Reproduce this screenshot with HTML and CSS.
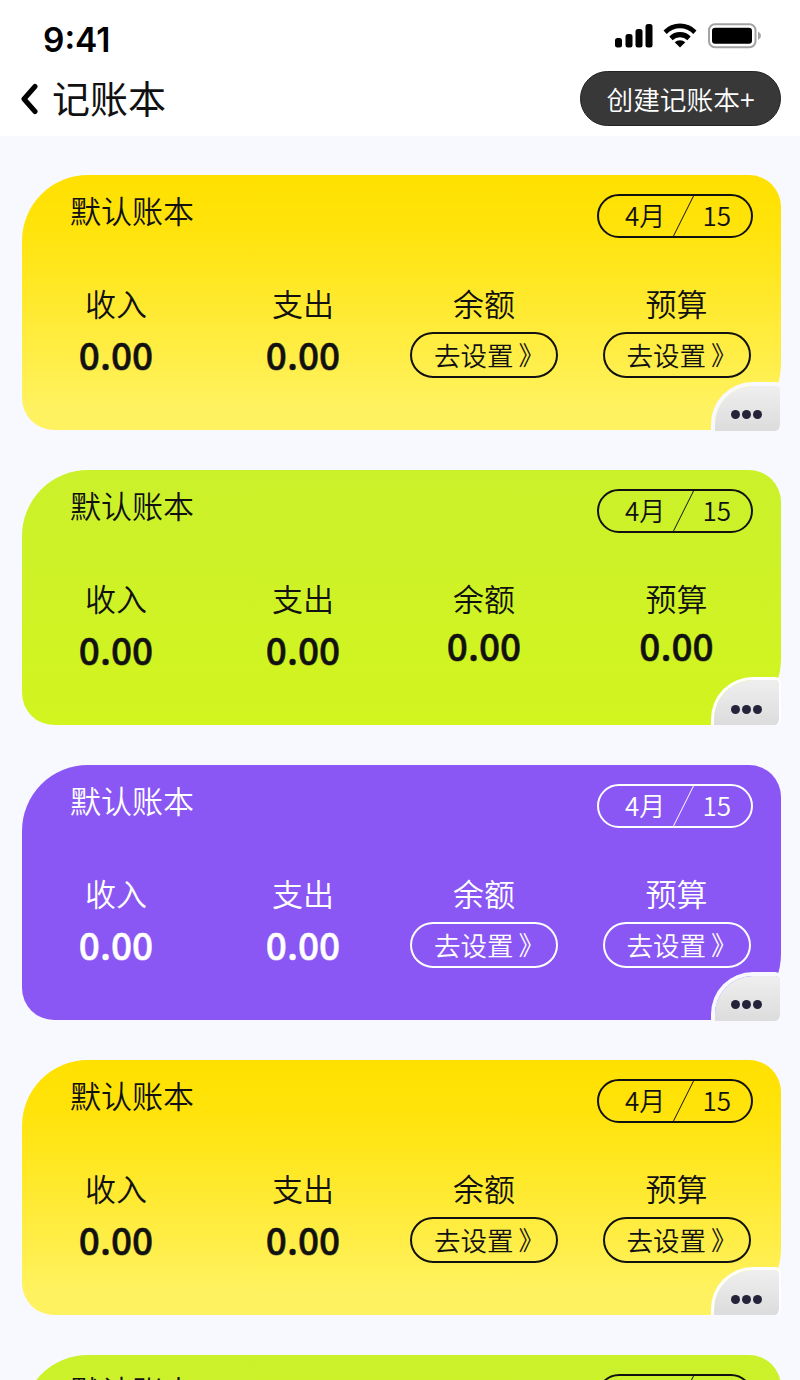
FILE: index.html
```
<!DOCTYPE html>
<html lang="zh-CN">
<head>
    <meta charset="UTF-8">
    <meta name="viewport" content="width=device-width, initial-scale=1.0">
    <title>记账本</title>
    <link rel="stylesheet" href="styles.css">
</head>
<body>

    <header class="header">
        <!-- Status Bar -->
        <div class="status-bar">
            <span class="time">9:41</span>
            <svg class="status-icons" width="148" height="28" viewBox="0 0 148 28">
                <rect x="1" y="16" width="7" height="9.5" rx="2.500"/>
                <rect x="11.500" y="12" width="7" height="13.5" rx="2.500"/>
                <rect x="21.500" y="7" width="7" height="18.500" rx="2.500"/>
                <rect x="31.500" y="2" width="7" height="23.500" rx="2.500"/>
                <path d="M49.500 8.500A23 23 0 0 1 82.500 8.500L79.300 12A18.500 18.500 0 0 0 52.700 12Z"/>
                <path d="M55.300 14.500A15 15 0 0 1 76.700 14.500L73.400 18.200A10.500 10.500 0 0 0 58.600 18.200Z"/>
                <path d="M60.700 20.300A8 8 0 0 1 71.300 20.300L66 25.500Z"/>
                <rect class="battery-case" x="95" y="2.200" width="46.500" height="23" rx="6"/>
                <rect x="98" y="5.700" width="40" height="16" rx="3"/>
                <path class="battery-tip" d="M144 9.500Q147 11 147 13.700T144 18Z"/>
            </svg>
        </div>

        <!-- Title -->
        <div class="nav">
            <svg class="back" width="18" height="32" viewBox="0 0 18 32">
                <path d="M15 3.500L4 16L15 28.500"/>
            </svg>
            <h1>记账本</h1>
            <button type="button" class="create">创建记账本+</button>
        </div>
    </header>

    <main class="books">
        <section class="card yellow">
            <div class="card-top">
                <h2>默认账本</h2>
                <div class="date">
                    <span>4月</span>
                    <svg class="slash" width="21" height="40" viewBox="0 0 21 40"><path d="M20.500 0L0.500 40"/></svg>
                    <span>15</span>
                </div>
            </div>
            <div class="stats">
                <div class="stat"><span>收入</span><b>0.00</b></div>
                <div class="stat"><span>支出</span><b>0.00</b></div>
                <div class="stat"><span>余额</span><button type="button" class="set">去设置<i>》</i></button></div>
                <div class="stat"><span>预算</span><button type="button" class="set">去设置<i>》</i></button></div>
            </div>
            <div class="more"><i></i><i></i><i></i></div>
        </section>

        <section class="card green">
            <div class="card-top">
                <h2>默认账本</h2>
                <div class="date">
                    <span>4月</span>
                    <svg class="slash" width="21" height="40" viewBox="0 0 21 40"><path d="M20.500 0L0.500 40"/></svg>
                    <span>15</span>
                </div>
            </div>
            <div class="stats">
                <div class="stat"><span>收入</span><b>0.00</b></div>
                <div class="stat"><span>支出</span><b>0.00</b></div>
                <div class="stat"><span>余额</span><b class="raised">0.00</b></div>
                <div class="stat"><span>预算</span><b class="raised">0.00</b></div>
            </div>
            <div class="more outlined"><i></i><i></i><i></i></div>
        </section>

        <section class="card purple">
            <div class="card-top">
                <h2>默认账本</h2>
                <div class="date">
                    <span>4月</span>
                    <svg class="slash" width="21" height="40" viewBox="0 0 21 40"><path d="M20.500 0L0.500 40"/></svg>
                    <span>15</span>
                </div>
            </div>
            <div class="stats">
                <div class="stat"><span>收入</span><b>0.00</b></div>
                <div class="stat"><span>支出</span><b>0.00</b></div>
                <div class="stat"><span>余额</span><button type="button" class="set">去设置<i>》</i></button></div>
                <div class="stat"><span>预算</span><button type="button" class="set">去设置<i>》</i></button></div>
            </div>
            <div class="more"><i></i><i></i><i></i></div>
        </section>

        <section class="card yellow">
            <div class="card-top">
                <h2>默认账本</h2>
                <div class="date">
                    <span>4月</span>
                    <svg class="slash" width="21" height="40" viewBox="0 0 21 40"><path d="M20.500 0L0.500 40"/></svg>
                    <span>15</span>
                </div>
            </div>
            <div class="stats">
                <div class="stat"><span>收入</span><b>0.00</b></div>
                <div class="stat"><span>支出</span><b>0.00</b></div>
                <div class="stat"><span>余额</span><button type="button" class="set">去设置<i>》</i></button></div>
                <div class="stat"><span>预算</span><button type="button" class="set">去设置<i>》</i></button></div>
            </div>
            <div class="more outlined"><i></i><i></i><i></i></div>
        </section>

        <section class="card green">
            <div class="card-top">
                <h2>默认账本</h2>
                <div class="date">
                    <span>4月</span>
                    <svg class="slash" width="21" height="40" viewBox="0 0 21 40"><path d="M20.500 0L0.500 40"/></svg>
                    <span>15</span>
                </div>
            </div>
        </section>
    </main>

</body>
</html>
```
FILE: styles.css
```
* {
    box-sizing: border-box;
}
body {
    margin: 0;
    height: 1380px;
    overflow: hidden;
    background: #f8f9fe;
    color: #111;
    font-family: "Noto Sans CJK SC", sans-serif;
    font-weight: 350;
}
h1, h2 {
    margin: 0;
    font-weight: 350;
}
button {
    font: inherit;
    color: inherit;
    padding: 0;
}
i {
    font-style: normal;
}

/* Header */
.header {
    height: 136px;
    background: #fff;
}
.status-bar {
    height: 71px;
    padding: 22px 38px 0 43px;
    display: flex;
    justify-content: space-between;
}
.time {
    font: 600 33.500px/36px Inter, sans-serif;
    color: #000;
}
.status-icons {
    fill: #000;
}
.status-icons .battery-case {
    fill: none;
    stroke: #a3a3a3;
    stroke-width: 2;
}
.status-icons .battery-tip {
    fill: #a3a3a3;
}
.nav {
    height: 55px;
    padding: 0 19px 0 20px;
    display: flex;
    align-items: center;
}
.back {
    fill: none;
    stroke: #000;
    stroke-width: 5;
    stroke-linecap: round;
    stroke-linejoin: round;
}
.nav h1 {
    margin-left: 14px;
    font-size: 38px;
    line-height: 51px;
    padding-bottom: 4px;
    font-weight: 400;
}
.create {
    width: 201px;
    height: 55px;
    margin-left: auto;
    border: 1px solid #222;
    border-radius: 28px;
    background: #383838;
    color: #fff;
    font-size: 26.700px;
    line-height: 50px;
}

/* Account cards */
.books {
    padding: 39px 19px 0 22px;
    display: flex;
    flex-direction: column;
    gap: 40px;
}
.card {
    position: relative;
    flex: none;
    height: 255px;
    border-radius: 66px 32px 66px 32px;
}
.yellow {
    background: linear-gradient(#ffe000, #ffe30a 20%, #fff260 92%);
}
.green {
    background: linear-gradient(#cbf12b, #d2f41f);
}
.purple {
    background: #8a57f4;
    color: #fff;
}
.card-top {
    height: 108px;
    padding: 19px 28px 0 48px;
    display: flex;
    justify-content: space-between;
}
.card-top h2 {
    font-size: 31px;
    line-height: 31px;
}
.date {
    width: 156px;
    height: 44px;
    padding: 0 20px 0 26px;
    display: flex;
    justify-content: space-between;
    border: 2px solid;
    border-radius: 22px;
    font-size: 26px;
    line-height: 38px;
}
.slash {
    margin-right: 1px;
    fill: none;
    stroke: currentColor;
    stroke-width: 1;
}
.stats {
    display: grid;
    grid-template-columns: 188px 186px 176px 209px;
}
.stat {
    display: flex;
    flex-direction: column;
    align-items: center;
    font-size: 31px;
    line-height: 40px;
}
.stat b {
    margin-top: 10px;
    font-size: 37px;
    line-height: 43px;
    font-weight: 500;
    -webkit-text-stroke: 0.500px;
}
.stat .raised {
    margin-top: 6px;
}
.set {
    width: 148px;
    height: 46px;
    margin-top: 9px;
    padding-left: 22px;
    display: flex;
    border: 2px solid;
    border-radius: 23px;
    background: none;
    font-size: 26.500px;
    line-height: 41px;
}
.set i {
    margin-left: 5px;
    font-size: 26px;
    line-height: 39px;
}

/* Corner menu */
.more {
    position: absolute;
    right: 0;
    bottom: -1px;
    width: 70px;
    height: 49px;
    padding: 11px 18px 0 0;
    display: flex;
    justify-content: flex-end;
    align-items: center;
    gap: 2px;
    border: solid #f8f9fe;
    border-width: 4px 1px 0 4px;
    border-radius: 42px 6px 6px 0;
    background: linear-gradient(#efefef, #dcdcdc) padding-box;
}
.more.outlined {
    bottom: 0;
    height: 48px;
    padding: 14px 17px 0 0;
    border-color: #fff;
    border-width: 3px 2px 0 3px;
}
.more i {
    width: 9px;
    height: 9px;
    border-radius: 50%;
    background: #25233a;
}
```
